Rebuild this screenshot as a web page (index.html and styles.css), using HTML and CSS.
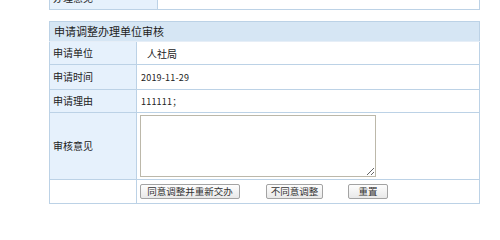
FILE: index.html
```html
<!DOCTYPE html>
<html lang="zh-CN">
<head>
<meta charset="utf-8">
<title>申请调整办理单位审核</title>
<link rel="stylesheet" href="styles.css">
</head>
<body>
<div class="page">
  <table class="grid grid-prev">
    <colgroup>
      <col class="col-label-prev">
      <col>
    </colgroup>
    <tr>
      <td class="label">办理意见</td>
      <td class="value"></td>
    </tr>
  </table>

  <table class="grid grid-main">
    <colgroup>
      <col class="col-label">
      <col>
    </colgroup>
    <tr>
      <th class="head" colspan="2">申请调整办理单位审核</th>
    </tr>
    <tr class="row row-unit">
      <td class="label">申请单位</td>
      <td class="value value-cn">人社局</td>
    </tr>
    <tr class="row row-time">
      <td class="label">申请时间</td>
      <td class="value value-small">2019-11-29</td>
    </tr>
    <tr class="row row-reason">
      <td class="label">申请理由</td>
      <td class="value value-small">111111；</td>
    </tr>
    <tr class="row-opinion">
      <td class="label">审核意见</td>
      <td class="value value-box"><textarea class="opinion"></textarea></td>
    </tr>
    <tr class="row row-actions">
      <td class="label label-empty"></td>
      <td class="value actions">
        <button class="btn btn-agree">同意调整并重新交办</button><button class="btn btn-disagree">不同意调整</button><button class="btn btn-reset">重置</button>
      </td>
    </tr>
  </table>
</div>
</body>
</html>
```

FILE: styles.css
```css
html, body {
  margin: 0;
  padding: 0;
  background: #ffffff;
}

body {
  font-family: "Noto Sans CJK SC", "Liberation Sans", sans-serif;
  color: #333333;
  overflow: hidden;
}

.page {
  padding-left: 49px;
  width: 431px;
}

.grid {
  width: 431px;
  border-collapse: collapse;
  table-layout: fixed;
}

.col-label-prev {
  width: 108px;
}

.col-label {
  width: 87px;
}

.grid td,
.grid th {
  border: 1px solid #bcd2e6;
  padding: 0;
}

.grid-prev {
  margin-top: -15px;
}

.grid-prev td {
  height: 23px;
}

.grid-main {
  margin-top: 11px;
}

.head {
  background: #d6e6f4;
  height: 19px;
  text-align: left;
  font-weight: normal;
  font-size: 11px;
  line-height: 19px;
  padding-left: 4px !important;
  color: #222222;
  border-bottom: 1px solid #e6eef7 !important;
}

.label {
  background: #e6f1fc;
  font-size: 10px;
  line-height: 12px;
  padding-left: 3px !important;
  color: #222222;
  white-space: nowrap;
}

.label-empty {
  background: #ffffff;
}

.row-unit td {
  height: 22px;
}

.row-time td {
  height: 24px;
}

.row-reason td {
  height: 22px;
}

.row-opinion td {
  height: 66px;
}

.row-actions td {
  height: 23px;
}

.value {
  background: #ffffff;
  padding-left: 4px !important;
  font-size: 10px;
  color: #222222;
  white-space: nowrap;
}

.value-cn {
  padding-left: 10px !important;
}

.value-small {
  font-size: 9px;
  letter-spacing: 0.2px;
}

.value-box {
  padding-left: 3px !important;
}

.opinion {
  display: block;
  box-sizing: border-box;
  width: 236px;
  height: 62px;
  margin: 0;
  border: 1px solid #bcb8aa;
  background: #ffffff;
  resize: both;
}

.actions {
  font-size: 0;
  padding-left: 3px !important;
}

.btn {
  box-sizing: border-box;
  height: 15px;
  margin: 0;
  padding: 0;
  font-family: "Noto Sans CJK SC", "Liberation Sans", sans-serif;
  font-size: 9.5px;
  line-height: 13px;
  color: #333333;
  background: linear-gradient(#fdfdfd, #e9e9e9);
  border: 1px solid #a3a3a3;
  border-radius: 2px;
  vertical-align: middle;
}

.btn-agree {
  width: 100px;
  margin-right: 26px;
}

.btn-disagree {
  width: 57px;
  margin-right: 25px;
}

.btn-reset {
  width: 40px;
}
```
